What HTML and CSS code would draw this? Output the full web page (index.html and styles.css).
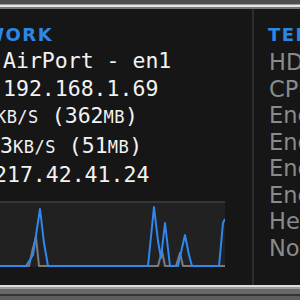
FILE: index.html
```html
<!DOCTYPE html>
<html>
<head>
<meta charset="utf-8">
<link rel="stylesheet" href="styles.css">
</head>
<body>
<div class="frame">
  <div class="topbar"></div>
  <div class="main">
    <section class="panel left">
      <h2 class="title net">NETWORK</h2>
      <div class="row r1">AirPort - en1</div>
      <div class="row r2">192.168.1.69</div>
      <div class="row r3">12<span class="u">KB/S</span> (362<span class="u">MB</span>)</div>
      <div class="row r4">3<span class="u">KB/S</span> (51<span class="u">MB</span>)</div>
      <div class="row r5">217.42.41.24</div>
      <div class="graph">
        <svg width="225" height="64" viewBox="0 0 225 64">
          <polyline class="g2" points="0,63 29,63 33,45 36,34 39,63 158,63 162,48 165,63 176,63 180,50 183,63 225,63"/>
          <polyline class="g1" points="0,63 26,63 33,52 40,6 44,40 48,63 148,63 154,4 158,38 161,55 165,20 170,63 178,63 182,45 185,32 189,52 192,63 219,63 223,20 225,16"/>
        </svg>
      </div>
    </section>
    <div class="divider"></div>
    <section class="panel right">
      <h2 class="title temp">TEMPERATURES</h2>
      <div class="label">HD Bay 1</div>
      <div class="label">CPU A</div>
      <div class="label">Enclosure Base</div>
      <div class="label">Enclosure Base</div>
      <div class="label">Enclosure Base</div>
      <div class="label">Enclosure Base</div>
      <div class="label">Heatsink A</div>
      <div class="label">Northbridge</div>
    </section>
  </div>
  <div class="bottombar"></div>
</div>
</body>
</html>
```
FILE: styles.css
```css
html, body {
  margin: 0;
  padding: 0;
  background: #151515;
}
.frame {
  width: 300px;
  height: 300px;
  display: flex;
  flex-direction: column;
  overflow: hidden;
}
.topbar {
  height: 9px;
  flex: none;
  background: linear-gradient(to bottom,
    #4e4e4e 0, #4e4e4e 4px,
    #9a9a9a 4px, #9a9a9a 5px,
    #e6e6e6 5px, #e6e6e6 7px,
    #767676 7px, #767676 9px);
}
.bottombar {
  height: 15px;
  flex: none;
  background: linear-gradient(to bottom,
    #dcdcdc 0, #dcdcdc 2px,
    #9c9c9c 2px, #9c9c9c 4px,
    #686868 4px, #686868 9px,
    #343434 9px, #343434 11px,
    #5e5e5e 11px, #5e5e5e 15px);
}
.main {
  flex: 1;
  display: flex;
  min-height: 0;
}
.panel {
  overflow: hidden;
  background: #161616;
  padding-top: 17px;
  box-sizing: border-box;
}
.left {
  width: 252px;
  flex: none;
}
.divider {
  width: 2px;
  flex: none;
  background: #2c2c2c;
}
.right {
  flex: 1;
  padding-left: 15px;
}
.title {
  margin: 0;
  height: 18px;
  font: bold 18px/18px "DejaVu Sans", sans-serif;
  letter-spacing: 1.5px;
  color: #2b88e6;
  white-space: nowrap;
}
.net {
  margin-left: -60px;
}
.temp {
  margin-left: -1px;
}
.row {
  font: 21.5px/27.5px "DejaVu Sans Mono", monospace;
  color: #f2f2f2;
  white-space: nowrap;
}
.title + .row { margin-top: 3px; }
.r1, .r2 { margin-left: 3px; }
.r3 { margin-left: -30px; }
.r4 { margin-left: 0; }
.r5 { margin-left: -6px; }
.u {
  font-size: 17px;
  letter-spacing: 0.5px;
}
.label {
  font: 22.5px/26.5px "DejaVu Sans", sans-serif;
  color: #8a8a8a;
  white-space: nowrap;
}
.title + .label { margin-top: 5px; }
.graph {
  margin-top: 12px;
  width: 225px;
  height: 64px;
  border-top: 2px solid #363636;
  background: #212121;
}
.graph svg {
  display: block;
}
.g1 {
  fill: none;
  stroke: #2f87ef;
  stroke-width: 2;
  stroke-linejoin: round;
}
.g2 {
  fill: none;
  stroke: #7a7a7a;
  stroke-width: 2;
  stroke-linejoin: round;
}
```
